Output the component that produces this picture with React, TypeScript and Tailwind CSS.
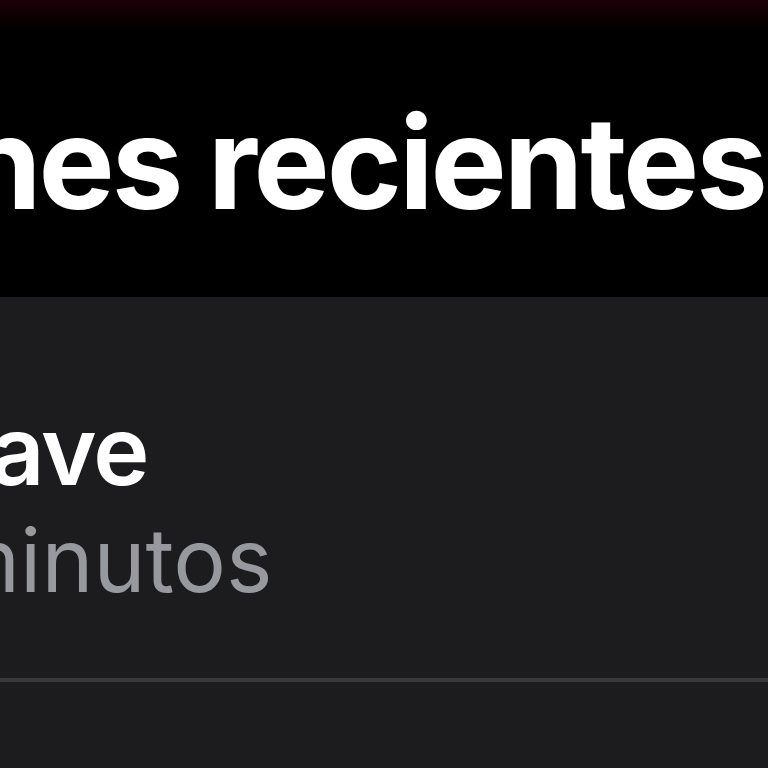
import React from 'react';

// Zoomed-in iOS list section: large title + first row of a grouped list
export default function App() {
  return (
    <div className="w-[768px] h-[768px] overflow-hidden bg-black font-['Inter','Noto_Sans',sans-serif] flex flex-col">
      {/* Large title area with faint tint at the top */}
      <div className="h-[297px] shrink-0 bg-gradient-to-b from-[#1c0007] via-black via-[16%] to-black overflow-hidden">
        <h1 className="pt-[99px] ml-[-38px] whitespace-nowrap text-[128px] leading-none font-bold tracking-[-0.024em] text-white">
          nes recientes
        </h1>
      </div>

      {/* Grouped list cell */}
      <div className="flex-1 bg-[#1c1c1e] overflow-hidden">
        <div className="pt-[106px] flex flex-col">
          <div className="ml-[-10px] whitespace-nowrap text-[95px] leading-none font-semibold tracking-[-0.02em] text-white">
            ave
          </div>
          <div className="mt-[18px] ml-[-57px] whitespace-nowrap text-[88px] leading-none font-normal text-[#98989f]">
            minutos
          </div>
        </div>
        <div className="mt-[74px] h-[4px] bg-[#3a3a3c]" />
      </div>
    </div>
  );
}
